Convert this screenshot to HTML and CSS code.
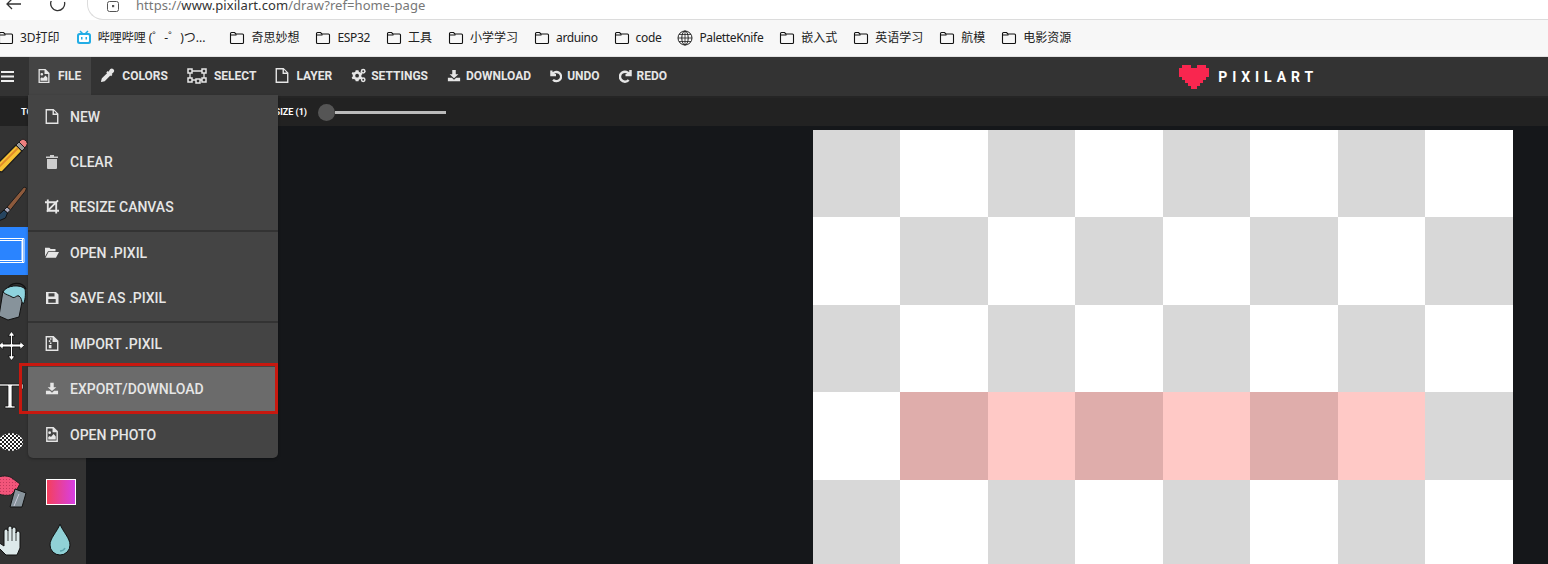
FILE: index.html
```html
<!DOCTYPE html>
<html lang="en">
<head>
<meta charset="utf-8">
<title>Pixilart</title>
<link rel="stylesheet" href="styles.css">
</head>
<body>
<div class="page">
  <header class="chrome">
    <svg class="chrome-back" width="18" height="12" viewBox="0 0 18 12"><path d="M16 4H2M7-1L2 4l5 5" fill="none" stroke="#333" stroke-width="1.3"/></svg>
    <svg class="chrome-reload" width="18" height="12" viewBox="0 0 18 12"><path d="M15.5 1a7 7 0 1 1-2-3.5" fill="none" stroke="#333" stroke-width="1.3"/></svg>
    <div class="address">
      <svg width="14" height="14" viewBox="0 0 14 14"><rect x="1.5" y="1.5" width="11" height="10" rx="2" fill="none" stroke="#555"/><rect x="6" y="5" width="2.2" height="2.2" fill="#555"/></svg>
      <span class="url">https://<b>www.pixilart.com</b>/draw?ref=home-page</span>
    </div>
  </header>

  <svg class="defs" width="0" height="0">
    <defs>
      <path id="fld" d="M1.500 3.500a1 1 0 0 1 1-1h3l1.500 1.500h6.500a1 1 0 0 1 1 1v7.500a1 1 0 0 1-1 1h-11a1 1 0 0 1-1-1zM1.500 5h6" fill="none" stroke="#111" stroke-width="1.100"/>
      <path id="file-img" d="M2 1h7l4 4v10H2zM3.300 2.300v11.400h8.400V6H8V2.300zM5.300 5a1.300 1.300 0 1 1 0 2.600A1.300 1.300 0 0 1 5.300 5zM4 12.700V10.300l1.500-1 1 1 2.500-2.700 2 2.200v2.900z" fill="currentColor" fill-rule="evenodd"/>
      <path id="file-o" d="M2 1h7.500L14 5.500V15H2zM3.300 2.300v11.400h9.400V6.500H8.500V2.300zM9.800 2.700v2.500h2.500z" fill="currentColor" fill-rule="evenodd"/>
      <path id="dl" d="M6 1h4v5h3L8 10.500 3 6h3zM1 10h4.500L8 12.300 10.500 10H15v4H1z" fill="currentColor"/>
      <pattern id="chk" width="4" height="4" patternUnits="userSpaceOnUse"><rect width="4" height="4" fill="#fff"/><rect width="2" height="2" fill="#222"/><rect x="2" y="2" width="2" height="2" fill="#222"/></pattern>
      <pattern id="chk-pink" width="3" height="3" patternUnits="userSpaceOnUse"><rect width="3" height="3" fill="#f2557a"/><rect width="1" height="1" fill="#c23a5c"/></pattern>
    </defs>
  </svg>

  <nav class="bookmarks">
    <a class="bm"><svg class="folder" viewBox="0 0 16 16"><use href="#fld"/></svg><span>3D打印</span></a>
    <a class="bm clipped"><svg class="folder" viewBox="0 0 16 16"><path d="M4 1l2.500 2.500M12 1L9.500 3.500" stroke="#23ade5" stroke-width="1.500"/><rect x="1" y="3" width="14" height="11" rx="2.500" fill="#23ade5"/><rect x="3" y="5" width="10" height="7" rx="1" fill="#fff"/><rect x="5" y="7" width="1.500" height="2.500" fill="#23ade5"/><rect x="9.500" y="7" width="1.500" height="2.500" fill="#23ade5"/></svg>哔哩哔哩 (゜-゜)つ...</a>
    <a class="bm"><svg class="folder" viewBox="0 0 16 16"><use href="#fld"/></svg>奇思妙想</a>
    <a class="bm"><svg class="folder" viewBox="0 0 16 16"><use href="#fld"/></svg><span class="lat">ESP32</span></a>
    <a class="bm"><svg class="folder" viewBox="0 0 16 16"><use href="#fld"/></svg>工具</a>
    <a class="bm"><svg class="folder" viewBox="0 0 16 16"><use href="#fld"/></svg>小学学习</a>
    <a class="bm"><svg class="folder" viewBox="0 0 16 16"><use href="#fld"/></svg><span class="lat">arduino</span></a>
    <a class="bm"><svg class="folder" viewBox="0 0 16 16"><use href="#fld"/></svg><span class="lat">code</span></a>
    <a class="bm"><svg class="folder" viewBox="0 0 16 16"><circle cx="8" cy="8" r="7" fill="none" stroke="#222"/><ellipse cx="8" cy="8" rx="3.200" ry="7" fill="none" stroke="#222"/><path d="M1 8h14M2 4.500h12M2 11.500h12M8 1v14" stroke="#222" stroke-width=".8"/></svg><span class="lat">PaletteKnife</span></a>
    <a class="bm"><svg class="folder" viewBox="0 0 16 16"><use href="#fld"/></svg>嵌入式</a>
    <a class="bm"><svg class="folder" viewBox="0 0 16 16"><use href="#fld"/></svg>英语学习</a>
    <a class="bm"><svg class="folder" viewBox="0 0 16 16"><use href="#fld"/></svg>航模</a>
    <a class="bm"><svg class="folder" viewBox="0 0 16 16"><use href="#fld"/></svg>电影资源</a>
  </nav>

  <div class="topbar">
    <button class="burger"><svg width="13" height="11" viewBox="0 0 13 11"><path d="M0 0h13v2H0zM0 4.500h13v2H0zM0 9h13v2H0z" fill="#eee"/></svg></button>
    <a class="nav-item active"><svg width="12" height="14" viewBox="2 1 11 14"><use href="#file-img"/></svg>FILE</a>
    <a class="nav-item"><svg width="15" height="15" viewBox="0 0 16 16"><path d="M11 1a2.500 2.500 0 0 1 3.500 3.500L12.500 6.500l.8.8-1.500 1.500-.8-.8L5 14l-3.500 1L1 14.500 2 11l5.500-5.500-.8-.8L8.200 3.200l.8.8z" fill="currentColor"/></svg>COLORS</a>
    <a class="nav-item"><svg width="20" height="16" viewBox="0 0 20 16"><path d="M3 3h14v9H3z" fill="none" stroke="currentColor" stroke-width="1.300"/><path d="M1 1h4v4H1zM15 1h4v4h-4zM1 10h4v4H1zM15 10h4v4h-4zM9 11h4v4H9z" fill="#333" stroke="currentColor" stroke-width="1.500"/></svg>SELECT</a>
    <a class="nav-item"><svg width="14" height="15" viewBox="2 1 12 14"><use href="#file-o"/></svg>LAYER</a>
    <a class="nav-item tight"><svg width="15" height="15" viewBox="0 0 16 16"><path d="M5 2.500h3l.4 1.600 1.500.8 1.400-.5 1 2-1.200 1.100v1.700l1.200 1.100-1 2-1.400-.5-1.500.8L8 14H5l-.4-1.600-1.500-.8-1.400.5-1-2L1.900 9V7.300L.7 6.200l1-2 1.400.5 1.500-.8z" fill="currentColor"/><circle cx="6.500" cy="8.200" r="2" fill="#333"/><circle cx="13" cy="3.500" r="2.600" fill="currentColor"/><circle cx="13" cy="3.500" r="1" fill="#333"/><circle cx="13" cy="12.500" r="2.600" fill="currentColor"/><circle cx="13" cy="12.500" r="1" fill="#333"/></svg>SETTINGS</a>
    <a class="nav-item tight"><svg width="14" height="14" viewBox="0 0 16 16"><use href="#dl"/></svg>DOWNLOAD</a>
    <a class="nav-item tight"><svg width="12" height="14" viewBox="0 0 13 14"><path d="M1.500 1v5h5M2.500 5.500a5 5 0 1 1 .8 5.500" fill="none" stroke="currentColor" stroke-width="2.500"/></svg>UNDO</a>
    <a class="nav-item tight"><svg width="13" height="14" viewBox="0 0 13 14"><path d="M11.500 1v5h-5M10.500 5.500a5 5 0 1 0-.8 5.500" fill="none" stroke="currentColor" stroke-width="2.500"/></svg>REDO</a>
    <div class="logo">
      <svg width="30" height="24" viewBox="0 0 10 8" shape-rendering="crispEdges"><path d="M1 0h3v1h2V0h3v1h1v3H9v1H8v1H7v1H6v1H4V7H3V6H2V5H1V4H0V1h1z" fill="#f9264f"/></svg>
      <span>PIXILART</span>
    </div>
  </div>

  <div class="subbar">
    <span class="sub-label">TOOLS</span>
    <span class="sub-size">SIZE (1)</span>
    <div class="slider"><span class="thumb"></span><span class="track"></span></div>
  </div>

  <div class="workspace">
    <aside class="tools">
      <div class="tool"><svg viewBox="0 0 48 48"><path d="M28 14l6 6-20 21-7-1 1-6z" fill="#f6c234" stroke="#1d1d1d" stroke-width="1.300"/><path d="M30 17L10 37" stroke="#e08a2a" stroke-width="1.800"/><path d="M28 14l3-3 6 6-3 3z" fill="#999" stroke="#1d1d1d"/><path d="M31 11l2-2a3 3 0 0 1 4 0l1.500 1.500a3 3 0 0 1 0 4L37 17z" fill="#ee8080" stroke="#1d1d1d"/></svg></div>
      <div class="tool"></div>
      <div class="tool"><svg viewBox="0 0 48 48"><path d="M36 8l2.500 1-1 3-15 19-3.500-3z" fill="#8d5a3c" stroke="#1d1d1d"/><path d="M19 28l3.500 3-3 3-3.500-3z" fill="#aab" stroke="#1d1d1d"/><path d="M16 31l3.500 3-2 5-7 3 1-7z" fill="#26445f" stroke="#111"/></svg></div>
      <div class="tool"></div>
      <div class="tool selected"><svg viewBox="0 0 48 48"><path d="M8 11.500h28v24H8M8 13.500h26v20H8M34.500 11.500v24" fill="none" stroke="#fff"/></svg></div>
      <div class="tool"></div>
      <div class="tool"><svg viewBox="0 0 48 48"><path d="M20 14c2-7 14-8 18 0" fill="none" stroke="#111" stroke-width="1.200"/><path d="M15 16l20 6-4 20-11 3-9-4z" fill="#87939b" stroke="#111"/><path d="M15 17c3-7 18-8 22-3 1 4 0 14-2 15-2-3-1-6-4-8-3-1-4 3-7 1s-6-2-9-5z" fill="#8ed3de" stroke="#111"/></svg></div>
      <div class="tool"></div>
      <div class="tool"><svg viewBox="0 0 48 48"><path d="M22.500 21v-8H20l3.500-4.500L27 13h-2.500v8H32v-2.500l4.500 4-4.500 4V24h-7.500v9H27l-3.500 4.500L20 33h2.500v-9H15v2.500l-4.500-4 4.500-4V21z" fill="#fff" stroke="#111" stroke-width=".9"/></svg></div>
      <div class="tool"></div>
      <div class="tool"><svg viewBox="0 0 48 48"><path d="M9 13h26v5h-1.500l-1-3H24v20h3v2H17v-2h3V15h-9l-1 3H9z" fill="#fff" stroke="#111" stroke-width=".7"/></svg></div>
      <div class="tool"></div>
      <div class="tool"><svg viewBox="0 0 48 48"><ellipse cx="23" cy="23" rx="12" ry="9" fill="url(#chk)"/></svg></div>
      <div class="tool"></div>
      <div class="tool"><svg viewBox="0 0 48 48"><path d="M11 10c5-2 10-1 13 1l8 6-3 5-6 6c-6 1-11 0-13-2z" fill="url(#chk-pink)" stroke="#222"/><path d="M27 22l11 4-4 14H22z" fill="#87939b" stroke="#111"/><path d="M31 27l-5 12" stroke="#ccd"/></svg></div>
      <div class="tool"><svg viewBox="0 0 48 48"><defs><linearGradient id="grad"><stop offset="0" stop-color="#f5405a"/><stop offset="1" stop-color="#d63fe8"/></linearGradient></defs><rect x="10.500" y="12.500" width="29" height="25" fill="url(#grad)" stroke="#fff"/></svg></div>
      <div class="tool"><svg viewBox="0 0 48 48"><path d="M8 30l2-3 6 4V16a2 2 0 0 1 4 0v-3a2 2 0 0 1 4 0v1a2 2 0 0 1 4 0v4a2 2 0 0 1 4 0v15l-3 7H18z" fill="#dde9ea" stroke="#111"/><path d="M20 16v10M24 14v12M28 17v9" stroke="#111" stroke-width=".8"/></svg></div>
      <div class="tool"><svg viewBox="0 0 48 48"><path d="M24 9c3 8 10 14 10 21a10 10 0 0 1-20 0c0-7 7-13 10-21z" fill="#90d1d6" stroke="#111"/><path d="M29 33c-1 2-3 3-5 3" fill="none" stroke="#5ca3ab" stroke-width="1.500"/></svg></div>
    </aside>

    <main class="stage">
      <div class="canvas">
        <i></i><i class="w"></i><i></i><i class="w"></i><i></i><i class="w"></i><i></i><i class="w"></i>
        <i class="w"></i><i></i><i class="w"></i><i></i><i class="w"></i><i></i><i class="w"></i><i></i>
        <i></i><i class="w"></i><i></i><i class="w"></i><i></i><i class="w"></i><i></i><i class="w"></i>
        <i class="w"></i><i class="p1"></i><i class="p2"></i><i class="p1"></i><i class="p2"></i><i class="p1"></i><i class="p2"></i><i></i>
        <i></i><i class="w"></i><i></i><i class="w"></i><i></i><i class="w"></i><i></i><i class="w"></i>
      </div>
    </main>
  </div>

  <div class="menu">
    <a class="menu-item"><svg width="14" height="15" viewBox="2 1 12 14"><use href="#file-o"/></svg>NEW</a>
    <a class="menu-item"><svg width="14" height="15" viewBox="0 0 14 15"><path d="M5 1h4v1.500h4V4H1V2.500h4zM2 5h10v9a1 1 0 0 1-1 1H3a1 1 0 0 1-1-1z" fill="currentColor" opacity=".85"/></svg>CLEAR</a>
    <a class="menu-item"><svg width="14" height="15" viewBox="0 0 15 15"><path d="M3 0v12h12M0 3h12v12M14 1L2 13" fill="none" stroke="currentColor" stroke-width="2"/></svg>RESIZE CANVAS</a>
    <hr class="menu-rule">
    <a class="menu-item"><svg width="16" height="13" viewBox="0 0 16 13"><path d="M0 1h5l1.500 1.500H12V5H3.500L0 11zM4 6h12l-3.500 6.500H.6z" fill="currentColor"/></svg>OPEN .PIXIL</a>
    <a class="menu-item"><svg width="14" height="14" viewBox="0 0 14 14"><path d="M1 1h10l2.500 2.500V13H1zM3.500 2.300V5.500h6V2.300zM3.300 8v3.800h7.400V8z" fill="currentColor" fill-rule="evenodd"/></svg>SAVE AS .PIXIL</a>
    <hr class="menu-rule">
    <a class="menu-item"><svg width="14" height="15" viewBox="2 1 12 14"><path d="M2 1h7.500L14 5.500V15H2zM3.300 2.300v11.400h9.400V6.500H8.500V2.300zM6 3h1.500v1.500H6zM5 5h1.500v1.500H5zM6 7h1.500v1.500H6zM5 9.500h2.500v3H5z" fill="currentColor" fill-rule="evenodd"/></svg>IMPORT .PIXIL</a>
    <a class="menu-item hot"><svg width="14" height="13" viewBox="0 0 16 15"><use href="#dl"/></svg>EXPORT/DOWNLOAD</a>
    <a class="menu-item last"><svg width="14" height="15" viewBox="2 1 11 14"><use href="#file-img"/></svg>OPEN PHOTO</a>
  </div>
  <div class="annotation"></div>
</div>
</body>
</html>
```
FILE: styles.css
```css
* { box-sizing: border-box; }
html, body { margin: 0; padding: 0; height: 564px; overflow: hidden; background: #15171a; }
a { color: inherit; text-decoration: none; }
.page { position: relative; width: 1548px; height: 564px; overflow: hidden; display: flex; flex-direction: column; font-family: Roboto, "Liberation Sans", sans-serif; }
.defs { position: absolute; }

.chrome { height: 20px; flex: none; background: #fff; display: flex; align-items: flex-start; padding-left: 5px; overflow: hidden; }
.chrome-back { flex: none; }
.chrome-reload { flex: none; margin-left: 26px; margin-top: 1px; }
.address { flex: 1; margin-left: 20px; margin-top: -14px; padding: 14px 0 0 18px; border: 1px solid #dcdcdc; border-top: none; border-right: none; border-radius: 0 0 0 16px; display: flex; gap: 16px; align-items: flex-start; height: 34px; }
.url { font: 13px/11px "Noto Sans", sans-serif; color: #777; letter-spacing: .07px; }
.url b { font-weight: 400; color: #333; }

.bookmarks { height: 37px; flex: none; background: #f7f7f7; border-bottom: 1px solid #e2e2e2; display: flex; align-items: center; gap: 16px; margin-left: -2px; }
.bm { display: flex; align-items: center; gap: 6px; font: 12px/16px "Noto Sans", "Noto Sans CJK SC", sans-serif; color: #222; white-space: nowrap; }
.bm.clipped { padding-right: 8px; }
.lat { letter-spacing: -.35px; }
.folder { width: 16px; height: 16px; flex: none; }

.topbar { height: 39px; flex: none; background: #333; display: flex; align-items: stretch; color: #e6e6e6; font: 700 12px/1 Roboto, sans-serif; }
.burger { width: 28.5px; padding: 0 0 0 1px; border: 0; background: none; display: flex; align-items: center; }
.nav-item { display: flex; align-items: center; gap: 7px; padding: 0 9.5px 2px; white-space: nowrap; }
.nav-item.tight { gap: 5px; }
.nav-item.active { background: #444; gap: 8px; }
.logo { display: flex; align-items: center; gap: 9px; margin-left: auto; margin-right: 230px; font: 700 14px/1 Roboto, sans-serif; color: #fff; letter-spacing: 4.9px; }

.subbar { height: 30px; flex: none; background: #222; border-top: 2px solid #252525; display: flex; align-items: center; color: #fff; font: 700 9px/1 Roboto, sans-serif; position: relative; }
.sub-label { margin-left: 21px; width: 245px; }
.sub-size { width: 41px; text-align: right; white-space: nowrap; }
.slider { display: flex; align-items: center; margin-left: 11px; }
.thumb { width: 17px; height: 17px; border-radius: 50%; background: #555; flex: none; }
.track { width: 111px; height: 3px; background: #bbb; }

.workspace { flex: 1; display: flex; min-height: 0; }
.tools { width: 86px; flex: none; background: #333; padding-top: 5px; display: grid; grid-template-columns: 36px 50px; grid-auto-rows: 48px; align-content: start; overflow: hidden; }
.tool { display: flex; justify-content: flex-end; overflow: hidden; }
.tool svg { width: 48px; height: 48px; flex: none; }
.tool:nth-child(even) { justify-content: flex-start; }
.tool.selected { background: #2a84ff; }
.stage { flex: 1; display: flex; justify-content: flex-end; padding: 4px 35px 0 0; overflow: hidden; min-width: 0; }
.canvas { width: 700px; display: grid; grid-template-columns: repeat(4, 87px 88px); grid-auto-rows: 87px 88px; align-content: start; flex: none; }
.canvas i { background: #d8d8d8; }
.canvas i.w { background: #fff; }
.canvas i.p1 { background: #dfadab; }
.canvas i.p2 { background: #ffc9c6; }

.menu { position: absolute; left: 28px; top: 95px; width: 250px; height: 363px; background: #444; border-radius: 0 0 5px 5px; color: #e6e6e6; font: 500 14px/1 Roboto, sans-serif; display: flex; flex-direction: column; box-shadow: 0 1px 3px rgba(0,0,0,.3); }
.menu-item { height: 45px; flex: none; display: flex; align-items: center; padding: 0 0 2px 17px; white-space: nowrap; }
.menu-item.last { padding-bottom: 0; }
.menu-item svg { width: 14px; margin-right: 11px; flex: none; }
.menu-rule { margin: 0 0 -1px; height: 2px; border: 0; background: #333; flex: none; }
.menu-item.hot { background: #6b6b6b; }
.annotation { position: absolute; left: 19px; top: 363px; width: 259px; height: 51px; border: 3px solid #c8180f; }
```
